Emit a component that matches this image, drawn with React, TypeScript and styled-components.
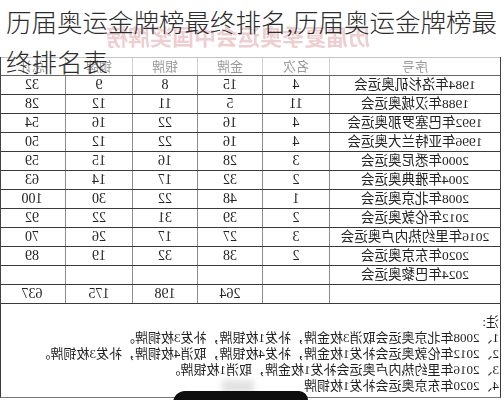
import { createGlobalStyle, styled } from 'styled-components';

const GlobalStyle = createGlobalStyle`
  html, body {
    margin: 0;
    padding: 0;
    background: #fff;
  }
  * {
    box-sizing: border-box;
  }
`;

const COLS = '171px 67px 65px 65px 67px 66px';

const HEADERS = ['序号', '名次', '金牌', '银牌', '铜牌', '总计'];

const ROWS: string[][] = [
  ['1984年洛杉矶奥运会', '4', '15', '8', '9', '32'],
  ['1988年汉城奥运会', '11', '5', '11', '12', '28'],
  ['1992年巴塞罗那奥运会', '4', '16', '22', '16', '54'],
  ['1996年亚特兰大奥运会', '4', '16', '22', '12', '50'],
  ['2000年悉尼奥运会', '3', '28', '16', '15', '59'],
  ['2004年雅典奥运会', '2', '32', '17', '14', '63'],
  ['2008年北京奥运会', '1', '48', '22', '30', '100'],
  ['2012年伦敦奥运会', '2', '39', '31', '22', '92'],
  ['2016年里约热内卢奥运会', '3', '27', '17', '26', '70'],
  ['2020年东京奥运会', '2', '38', '32', '19', '89'],
  ['2024年巴黎奥运会', '', '', '', '', ''],
  ['', '', '264', '198', '175', '637'],
];

const NOTES = [
  '注:',
  '1、2008年北京奥运会取消3枚金牌，补发1枚银牌，补发3枚铜牌。',
  '2、2012年伦敦奥运会补发1枚金牌，补发4枚银牌，取消4枚铜牌，补发3枚铜牌。',
  '3、2016年里约热内卢奥运会补发1枚金牌，取消1枚银牌。',
  '4、2020年东京奥运会补发1枚铜牌',
];

const App = () => {
  return (
    <St.Page>
      <GlobalStyle />
      {/* the scanned table is mirrored left to right */}
      <St.Scan>
        <St.Watermark>
          <span>历届夏季奥运会中国奖牌榜</span>
        </St.Watermark>
        <St.Table>
          <St.Row $head>
            {HEADERS.map((h) => (
              <St.Cell key={h} $head>
                {h}
              </St.Cell>
            ))}
          </St.Row>
          {ROWS.map((row, i) => (
            <St.Row key={i}>
              {row.map((v, j) => (
                <St.Cell key={j} $wide={j === 0}>
                  {v}
                </St.Cell>
              ))}
            </St.Row>
          ))}
        </St.Table>
        <St.Notes>
          {NOTES.map((n) => (
            <p key={n}>{n}</p>
          ))}
        </St.Notes>
      </St.Scan>
      <St.Title>历届奥运金牌榜最终排名,历届奥运金牌榜最终排名表</St.Title>
      <St.Smudge />
      <St.Blot />
    </St.Page>
  );
};

export default App;

const St = {
  Page: styled.div`
    position: relative;
    width: 504px;
    height: 400px;
    overflow: hidden;
    background: #fff;
  `,
  Scan: styled.div`
    display: flex;
    flex-direction: column;
    width: 504px;
    height: 400px;
    padding-left: 3px;
    transform: scaleX(-1);
    filter: blur(0.25px);
  `,
  Watermark: styled.div`
    display: flex;
    align-items: flex-end;
    height: 57px;
    padding: 0 0 10px 131px;

    & > span {
      font-family: 'Noto Sans CJK SC', sans-serif;
      font-size: 22px;
      line-height: 24px;
      font-weight: 700;
      color: #e7b9bc;
      opacity: 0.7;
    }
  `,
  Table: styled.div`
    display: flex;
    flex-direction: column;
    width: 501px;
    border-left: 1px solid #444;
    border-right: 1px solid #444;
  `,
  Row: styled.div<{ $head?: boolean }>`
    display: grid;
    grid-template-columns: ${COLS};
    height: 19px;
    border-top: ${({ $head }) => ($head ? '1px solid #c4c4c4' : 'none')};
    border-bottom: 1px solid ${({ $head }) => ($head ? '#666' : '#3a3a3a')};
  `,
  Cell: styled.div<{ $head?: boolean; $wide?: boolean }>`
    display: flex;
    align-items: center;
    justify-content: center;
    border-right: 1px solid ${({ $head }) => ($head ? '#d0d0d0' : '#8c8c8c')};
    font-family: 'Liberation Serif', 'Noto Sans CJK SC', serif;
    font-size: ${({ $head, $wide }) => ($head ? '13px' : $wide ? '13.5px' : '14px')};
    color: ${({ $head }) => ($head ? '#9a9a9a' : '#222')};
    line-height: 1;
    white-space: nowrap;

    &:last-child {
      border-right: none;
    }
  `,
  Notes: styled.div`
    width: 501px;
    height: 94px;
    padding: 10px 0 0 1px;
    border-left: 1px solid #3a3a3a;
    border-right: 1px solid #3a3a3a;
    border-bottom: 1px solid #777;

    & > p {
      margin: 0;
      font-family: 'Liberation Serif', 'Noto Sans CJK SC', serif;
      font-size: 13px;
      line-height: 16px;
      color: #1e1e1e;
      white-space: nowrap;
    }
  `,
  Title: styled.div`
    position: absolute;
    top: 1px;
    left: 6px;
    width: 498px;
    font-family: 'Noto Sans CJK SC', sans-serif;
    font-size: 25.5px;
    font-weight: 300;
    line-height: 40px;
    color: #2c2c2c;
  `,
  Smudge: styled.div`
    position: absolute;
    left: 222px;
    top: 380px;
    width: 32px;
    height: 13px;
    background: #e2e2e2;
    filter: blur(3px);
  `,
  Blot: styled.div`
    position: absolute;
    left: 173px;
    top: 391px;
    width: 135px;
    height: 14px;
    background: #0e0e0e;
    border-radius: 12px 9px 0 0;
  `,
};
